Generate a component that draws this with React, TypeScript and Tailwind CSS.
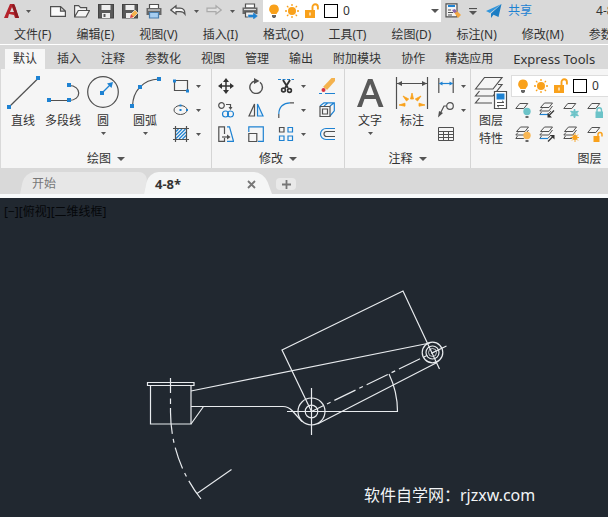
import type { ReactNode } from 'react';

const INK = '#505050';
const BLUE = '#1e82d2';
const AMBER = '#f9a11b';
const TEAL = '#6cc3c8';

function Svg({ w = 16, h = w, children }: { w?: number; h?: number; children: ReactNode }) {
  return (
    <svg width={w} height={h} viewBox={`0 0 ${w} ${h}`} fill="none" stroke={INK} strokeWidth="1.2" className="block shrink-0" aria-hidden="true">
      {children}
    </svg>
  );
}

function Caret({ big = false }: { big?: boolean }) {
  return big ? (
    <Svg w={8} h={4}><path d="M0 0h8L4 4z" fill="#555" stroke="none" /></Svg>
  ) : (
    <Svg w={5} h={3}><path d="M0 0h5L2.5 3z" fill="#555" stroke="none" /></Svg>
  );
}

function Dot({ x, y, s = 4 }: { x: number; y: number; s?: number }) {
  return <rect x={x - s / 2} y={y - s / 2} width={s} height={s} fill={BLUE} stroke="none" />;
}

/* ---------- quick access icons ---------- */

const AppLogo = () => (
  <Svg w={16}>
    <path d="M0 15 6 1h4l1 2 4 12h-4l-1-3-5-1-1 4z" fill="#b5232c" stroke="none" />
    <path d="M6 9 8 4l2 5z" fill="#d9d9d9" stroke="none" />
    <path d="M10 1l1 2 4 12h-3L8 2z" fill="#8c1a22" stroke="none" />
  </Svg>
);
const NewFile = () => <Svg><path d="M.6 3.600h10l4.800 4.500v5.300H.6zM10.500 3.600v4.600h4.900" fill="#fafafa" /></Svg>;
const OpenFile = () => <Svg><path d="M.6 14V2.600h4l2 2h6v3M.6 14l3.700-6.500H15.500L12 14z" fill="#f4f4f4" /></Svg>;
const SaveFile = () => (
  <Svg>
    <path d="M.5 1.500h15v13.500H.5z" fill="#5a5a5a" stroke="#444" />
    <path d="M3.500 2h9v5h-9zM4 10h8v5H4z" fill="#efefef" stroke="none" />
    <path d="M5.500 11h2v3h-2z" fill="#5a5a5a" stroke="none" />
  </Svg>
);
const SaveAs = () => (
  <Svg>
    <path d="M.5 1.500h15v13.500H.5z" fill="#5a5a5a" stroke="#444" />
    <path d="M3.500 2h9v5h-9zM4 10h8v5H4z" fill="#efefef" stroke="none" />
    <path d="m8 15 1-4 4-4 3 3-4.500 4.500z" fill="#f4b24d" stroke="#fff" strokeWidth=".6" />
    <path d="m8 15 1-4 2.500 3z" fill="#d8434e" stroke="none" />
  </Svg>
);
const Printer = () => (
  <Svg>
    <path d="M3.500 1.500h9v4h-9z" fill="#fff" />
    <path d="M.5 5h15v7H.5z" fill="#666" stroke="none" />
    <path d="M2 7h12" stroke="#ddd" />
    <path d="M3.500 9.500h9v5.500h-9z" fill="#a6cdf0" stroke="#4a7fae" />
  </Svg>
);
const PlotPrinter = () => (
  <Svg>
    <path d="M3.500 1h9v4h-9z" fill="#fff" />
    <path d="M.5 4.500h15v6.500H.5z" fill="#666" stroke="none" />
    <path d="M2 6.500h12" stroke="#ddd" />
    <path d="M3.500 9h9v5h-9z" fill="#f0f0f0" />
    <path d="M6 11.500h5V9l5 4-5 4v-2.500H6z" fill="#1e82d2" stroke="#d9d9d9" strokeWidth=".5" />
  </Svg>
);
const Undo = () => <Svg><path d="M.8 7 6 2.800v2.400h4c3.500 0 5 2.500 5 6-1.200-2-2.800-2.600-5-2.600H6V11z" fill="#f4f4f4" /></Svg>;
const Redo = () => <Svg><path d="M15.200 7 10 2.800v2.400H1v3.400h9V11z" fill="#e0e0e0" stroke="#aaa" /></Svg>;
const LayerTool = () => (
  <Svg>
    <path d="M1 .8h11v13H1z" fill="#f3f3f3" />
    <path d="M3 3h7" stroke={BLUE} strokeWidth="2" />
    <path d="M3 7h3M3 9.500h5M3 12h4" />
    <path d="m8 8 3-1 5 5-3 3z" fill="#f4a742" stroke="none" />
    <path d="m7 7 3-1 2 3-3 1z" fill="#8866b0" stroke="none" />
  </Svg>
);
const Send = () => (
  <Svg>
    <path d="M15.500 1 0 8l4 2z" fill="#3296dc" stroke="none" />
    <path d="M15.500 1 5 10.500V15l2.500-3.200L12.500 14z" fill="#1b7dc4" stroke="none" />
  </Svg>
);

/* ---------- layer state icons ---------- */

const Bulb = () => (
  <Svg w={12} h={16}>
    <path d="M6 1.500a4.800 4.800 0 0 1 2.800 8.700V11H3.200v-.8A4.800 4.800 0 0 1 6 1.500z" fill={AMBER} stroke="none" />
    <path d="M4 12h4v1.500L7 15H5l-1-1.500z" fill="#666" stroke="none" />
  </Svg>
);
const Sun = () => (
  <Svg>
    <circle cx="8" cy="8" r="4" fill={AMBER} stroke="none" />
    <path d="M8 1v2M8 13v2M1 8h2M13 8h2M3 3l1.400 1.400M11.600 11.600 13 13M13 3l-1.400 1.400M3 13l1.400-1.400" stroke={AMBER} strokeWidth="1.3" />
  </Svg>
);
const Unlock = () => (
  <Svg>
    <path d="M1 7h10v8H1z" fill={AMBER} stroke="none" />
    <path d="M8.500 7V4a2.700 2.700 0 0 1 5.400 0v2.500" stroke={AMBER} strokeWidth="1.900" />
    <path d="M6 9.500v3" stroke="#fff" />
  </Svg>
);
const Swatch = () => <span className="block size-[14px] shrink-0 border border-black bg-white" />;

/* ---------- large ribbon icons ---------- */

const LineIcon = () => <Svg w={36}><path d="M4.500 32.500 33 4.500" /><Dot x={4} y={33} /><Dot x={33} y={4} /></Svg>;
const PolylineIcon = () => (
  <Svg w={36}><path d="M4 26.500h20c13 0 13-15 0-15" /><Dot x={4} y={26} /><Dot x={24} y={26} /><Dot x={24} y={11} /></Svg>
);
const CircleIcon = () => (
  <Svg w={36}>
    <circle cx="18" cy="18" r="15.300" />
    <Dot x={17} y={19} />
    <path d="m18 18 8-8" stroke={BLUE} />
    <path d="m28 8-1.500 6L22 9.500z" fill={BLUE} stroke="none" />
  </Svg>
);
const ArcIcon = () => (
  <Svg w={36}><path d="M5.500 32C6 18 15 5.500 32 5" /><Dot x={5} y={32} /><Dot x={13} y={13} /><Dot x={32} y={5} /></Svg>
);
const TextIcon = () => (
  <Svg w={36}>
    <path d="M5 33 16 5h4.500l11 28h-4.800l-3-8H12.500l-2.800 8zM14 21h8.200L18.200 10z" fill="#595959" fillRule="evenodd" stroke="none" />
  </Svg>
);
const DimensionIcon = () => (
  <Svg w={36}>
    <path d="M2.500 3v32M33.500 3v32M3 9.500h30" />
    <path d="m3 9.500 5-2.500v5zM33 9.500 28 7v5z" fill={INK} stroke="none" />
    <path d="m18 19-1.500 6h3zM9 22l3.500 5 2.200-2zM27 22l-3.500 5-2.200-2zM5 31l6-1.800v3zM31 31l-6-1.800v3z" fill={AMBER} stroke={AMBER} strokeWidth=".8" />
  </Svg>
);
const LayerPropsIcon = () => (
  <Svg w={36}>
    <path d="m2.500 15 9-11.500H29L20 15z" fill="#f5f5f5" />
    <path d="M6.500 17 2.500 22H20l9-11.500h-4M6.500 24l-4 5H19" />
    <path d="M21.500 17.500h12v17h-12z" fill="#fff" />
    <path d="M23.500 19.500h8v6h-8z" fill={BLUE} stroke="none" />
    <path d="M24 28.500h7l-2-1.700M31 31.500h-7l2 1.700" strokeWidth="1" />
  </Svg>
);

/* ---------- small ribbon icons ---------- */

const RectIcon = () => <Svg><path d="M1.500 2.500h13v10h-13z" /><Dot x={1.500} y={3} s={3} /><Dot x={14.500} y={13} s={3} /></Svg>;
const EllipseIcon = () => <Svg><ellipse cx="7.500" cy="8" rx="6.500" ry="4.500" strokeWidth="1" /><Dot x={7.500} y={8} s={2} /><Dot x={14} y={8} s={2} /><Dot x={7.500} y={3.500} s={2} /></Svg>;
const HatchIcon = () => (
  <Svg>
    <path d="M3 5.500 5.500 3M3 9l6-6M3 12.500 12.500 3M6 13l7-7M9.500 13 13 9.500" stroke={BLUE} />
    <path d="M2.500 0v16M13.500 0v16M0 2.500h16M0 13.500h16" />
  </Svg>
);
const MoveIcon = () => (
  <Svg>
    <path d="M8 2v12M2 8h12" stroke="#333" strokeWidth="1.500" />
    <path d="m8 0 3 4H5zM8 16l3-4H5zM0 8l4-3v6zM16 8l-4-3v6z" fill="#333" stroke="none" />
  </Svg>
);
const RotateIcon = () => <Svg><path d="M12 4.200A6.300 6.300 0 1 1 7 3" strokeWidth="1.400" /><path d="M6 0l5.500 3L6 6z" fill={INK} stroke="none" /></Svg>;
const TrimIcon = () => (
  <Svg>
    <path d="M0 1.500h16" stroke={BLUE} strokeDasharray="3 1.500" />
    <path d="m5 2 5 8M12 2 7 10" stroke="#333" strokeWidth="1.900" />
    <circle cx="5.500" cy="12" r="1.900" stroke="#333" strokeWidth="1.600" /><circle cx="11.500" cy="12.500" r="1.900" stroke="#333" strokeWidth="1.600" />
  </Svg>
);
const EraseIcon = () => (
  <Svg>
    <path d="m4 9 8.500-9H16v3L8 12z" fill="#f4b24d" stroke="none" />
    <path d="m4 9 4 3-2 1.500-3-1z" fill="#eee" stroke="none" />
    <circle cx="4.500" cy="12" r="2" fill="#d8323f" stroke="none" />
    <path d="M0 15.500h3M6 15.500h10" stroke={BLUE} />
  </Svg>
);
const CopyIcon = () => (
  <Svg>
    <circle cx="3.500" cy="3.500" r="2.800" /><path d="M8 2.500h4.500V6" /><path d="M10.500 5h4l-2 3z" fill={INK} stroke="none" />
    <circle cx="7.500" cy="12" r="3" stroke={BLUE} /><circle cx="12.500" cy="12" r="3" stroke={BLUE} />
  </Svg>
);
const MirrorIcon = () => <Svg><path d="M6.500 2v12H1z" /><path d="M9.500 2v12H15z" fill="#d9ecfb" stroke={BLUE} /></Svg>;
const FilletIcon = () => <Svg><path d="M.8 16v-4M12 .8h4" /><path d="M.8 12C.8 5 5.500 .8 12 .8" stroke={BLUE} /></Svg>;
const BoxIcon = () => (
  <Svg><path d="M5 4 9 .8h6.300v8L11 14M1 4l4-3.200h4M11 4l4.300-3.200" stroke={BLUE} /><path d="M1 4.500h10v10H1zM3.500 7h5v5h-5z" /></Svg>
);
const StretchIcon = () => (
  <Svg><path d="M6.500 8V.8H.8v14.500h5.700V12" /><path d="M9 .8h2.500l4 14.500H9" stroke={BLUE} /><path d="M4 11h6" /><path d="m9 8.500 3.500 2.500L9 13.500z" fill={INK} stroke="none" /></Svg>
);
const ScaleIcon = () => <Svg><path d="M.8 6V.8h14.500v14.500H10" stroke={BLUE} /><path d="M.8 7.500h8v8h-8z" /></Svg>;
const ArrayIcon = () => (
  <Svg><path d="M1.500 1.500h4.500v4.500H1.500z" /><path d="M10 1.500h4.500v4.500H10zM1.500 10h4.500v4.500H1.500zM10 10h4.500v4.500H10z" stroke={BLUE} /></Svg>
);
const OffsetIcon = () => <Svg><path d="M16 2.500H7a5.500 5.500 0 0 0 0 11h9" stroke={BLUE} /><path d="M16 5.500H7.500a2.500 2.500 0 0 0 0 5H16" /></Svg>;
const LinearIcon = () => (
  <Svg><path d="M.8 0v15M15.200 0v15" /><path d="M1.500 5.500h13" stroke={BLUE} /><path d="m1 5.500 3.500-2v4zM15 5.500l-3.500-2v4z" fill={BLUE} stroke="none" /></Svg>
);
const LeaderIcon = () => <Svg><circle cx="12" cy="4" r="3.300" /><path d="M8.500 4H6L2 12" /><path d="M0 15.500 1 9l4 2z" fill={INK} stroke="none" /></Svg>;
const TableIcon = () => <Svg><path d="M.5 1.500h15v13H.5zM.5 5.500h15M.5 8.500h15M.5 11.500h15M5.500 5.500v9M10.500 5.500v9" strokeWidth="1" /></Svg>;

const Sheet = ({ stack = false }: { stack?: boolean }) =>
  stack ? (
    <>
      <path d="m1.500 5.500 4-4.500h8L10 5.500zM3 6.500.8 9h9L13.500 4" strokeWidth="1" />
      <path d="M2.500 10 .8 12.500h8L12 9" strokeWidth="1" />
    </>
  ) : (
    <path d="m.8 6.500 4-5h8l-4 5z" strokeWidth="1" />
  );
const LayerOff = () => <Svg><Sheet /><circle cx="12" cy="9.500" r="3.700" fill={TEAL} stroke="none" /><path d="M10.500 14h3v2h-3z" fill="#666" stroke="none" /></Svg>;
const LayerIsolate = () => <Svg><Sheet stack /><path d="M1 12.500h8" stroke={BLUE} /><path d="m15 8.500-5 5" stroke="#333" /><path d="M8.500 15.500V11l4.500 4.500z" fill="#333" stroke="none" /></Svg>;
const LayerFreeze = () => (
  <Svg><Sheet /><circle cx="11.500" cy="11.500" r="2.500" stroke={TEAL} /><path d="M11.500 7v9M7.500 9.200l8 4.600M15.500 9.200l-8 4.600" stroke={TEAL} strokeWidth="1.500" /></Svg>
);
const LayerLock = () => <Svg><Sheet /><path d="M8.500 9.500h7.500V16H8.500z" fill={TEAL} stroke="none" /><path d="M10 10V8a2.200 2.200 0 0 1 4.500 0v2" stroke={TEAL} strokeWidth="1.400" /></Svg>;
const LayerOn = () => <Svg><Sheet stack /><circle cx="12" cy="9.500" r="3.700" fill="#f8b653" stroke="none" /><path d="M10.500 14h3v2h-3z" fill="#666" stroke="none" /></Svg>;
const LayerUnisolate = () => <Svg><Sheet stack /><path d="M1 12.500h8" stroke={BLUE} /><path d="m9 15.500 5-5" stroke="#333" /><path d="M15.500 9v4.500L11 9z" fill="#333" stroke="none" /></Svg>;
const LayerThaw = () => (
  <Svg>
    <Sheet stack /><circle cx="12" cy="11.500" r="2.500" fill={AMBER} stroke="none" />
    <path d="M12 7v9M7.500 11.500H16M9 8.500l6 6M15 8.500l-6 6" stroke={AMBER} strokeWidth=".9" />
  </Svg>
);
const LayerUnlock = () => <Svg><Sheet /><path d="M6.500 10h6v6h-6z" fill={AMBER} stroke="none" /><path d="M11 10V8.500a2 2 0 0 1 4 0v2" stroke={AMBER} strokeWidth="1.500" /></Svg>;

/* ---------- building blocks ---------- */

function QuickButton({ label, children }: { label: string; children: ReactNode }) {
  return <button type="button" aria-label={label} className="flex w-6 shrink-0 justify-center">{children}</button>;
}

function MiniCaret({ label }: { label: string }) {
  return <button type="button" aria-label={label} className="flex w-3 shrink-0 justify-center"><Caret /></button>;
}

function LargeTool({ icon, label, menu = false, wide = false }: { icon: ReactNode; label: ReactNode; menu?: boolean; wide?: boolean }) {
  return (
    <button type="button" className={`flex shrink-0 flex-col items-center gap-[2px] whitespace-nowrap ${wide ? 'w-10' : 'w-9'}`}>
      {icon}
      <span className="leading-[18px]">{label}</span>
      {menu && <Caret />}
    </button>
  );
}

function SmallTool({ icon, label, menu = false }: { icon: ReactNode; label: string; menu?: boolean }) {
  return (
    <button type="button" aria-label={label} className="flex h-6 shrink-0 items-center">
      <span className="flex w-6 justify-center">{icon}</span>
      {menu && <span className="flex w-[11px] justify-center"><Caret /></span>}
    </button>
  );
}

function Panel({ title, className, children }: { title: string; className: string; children: ReactNode }) {
  return (
    <section className={`flex shrink-0 flex-col border-r border-[#d5d5d5] pt-[5px] ${className}`}>
      <div className="flex h-[72px]">{children}</div>
      <button type="button" className="flex h-[22px] items-center justify-center gap-[6px] pt-[3px]">
        {title}<Caret big />
      </button>
    </section>
  );
}

function LayerSelect({ label, className }: { label: string; className: string }) {
  return (
    <div className={`flex shrink-0 items-center bg-white pl-[5px] ${className}`}>
      <Bulb />
      <span className="pl-1"><Sun /></span>
      <span className="pl-1"><Unlock /></span>
      <span className="pl-1"><Swatch /></span>
      <select aria-label={label} className="min-w-0 flex-1 appearance-none bg-transparent pl-[5px] outline-none">
        <option>0</option>
      </select>
      <span className="pr-[2px]"><Caret big /></span>
    </div>
  );
}

const menus = ['文件(F)', '编辑(E)', '视图(V)', '插入(I)', '格式(O)', '工具(T)', '绘图(D)', '标注(N)', '修改(M)', '参数(P)'];
const ribbonTabs = ['默认', '插入', '注释', '参数化', '视图', '管理', '输出', '附加模块', '协作', '精选应用', 'Express Tools'];

function Drawing() {
  return (
    <svg width="608" height="290" viewBox="0 227 608 290" fill="none" stroke="#e8ebee" strokeWidth="1.200" className="block" role="img" aria-label="4-8">
      <path d="M147.500 382.500h46.500v3h-46.500zM150.500 385.500v38.500h40.500v-38.500" />
      <path d="M170.500 378v15M170.500 398.500v5.500M170.500 408v4" />
      <path d="M170.500 412A141 141 0 0 0 201 499" strokeDasharray="22 5 4 5" />
      <path d="m197 493.500 34.500-24" />
      <path d="M191 391 430 343M191 406.500h92q5 0 9 4l10 11M191 424l12.500-17.500" />
      <circle cx="311.500" cy="411.500" r="13.500" />
      <circle cx="311.500" cy="411.500" r="6.300" />
      <path d="M311.500 388v47M287 411.500h111M317.500 424 437 362.500" />
      <path d="M311.500 411.500 282 350l121-59 36.500 78" />
      <path d="m311.500 411.500 135-65.500" strokeDasharray="23.500 4.200 4 4.200" strokeDashoffset="10.500" />
      <path d="M389 374a86.500 86.500 0 0 1 8.500 37.500" />
      <circle cx="432.500" cy="352.500" r="10.300" />
      <circle cx="432.500" cy="352.500" r="6.500" />
      <circle cx="432.500" cy="352.500" r="4" strokeWidth=".8" />
    </svg>
  );
}

export default function App() {
  return (
    <div className="flex min-h-screen w-full flex-col overflow-hidden bg-[#d9d9d9] font-['Noto_Sans','Noto_Sans_CJK_SC',sans-serif] text-[12px] leading-4 whitespace-nowrap text-[#333]">
      <header>
        <div className="flex h-[22px] items-center overflow-hidden">
          <button type="button" aria-label="应用程序菜单" className="flex w-[46px] shrink-0 items-center gap-[6px] pl-1"><AppLogo /><Caret /></button>
          <QuickButton label="新建"><NewFile /></QuickButton>
          <QuickButton label="打开"><OpenFile /></QuickButton>
          <QuickButton label="保存"><SaveFile /></QuickButton>
          <QuickButton label="另存为"><SaveAs /></QuickButton>
          <QuickButton label="打印"><Printer /></QuickButton>
          <QuickButton label="放弃"><Undo /></QuickButton>
          <MiniCaret label="放弃列表" />
          <QuickButton label="重做"><Redo /></QuickButton>
          <MiniCaret label="重做列表" />
          <QuickButton label="批处理打印"><PlotPrinter /></QuickButton>
          <LayerSelect label="当前图层" className="ml-[1px] h-[22px] w-[178px]" />
          <QuickButton label="图层工具"><LayerTool /></QuickButton>
          <button type="button" aria-label="自定义" className="flex w-4 shrink-0 justify-center">
            <Svg w={8} h={7}><path d="M0 .5h8" /><path d="M0 3h8L4 7z" fill="#555" stroke="none" /></Svg>
          </button>
          <button type="button" className="ml-[5px] flex shrink-0 items-center gap-[6px] text-[#1e82d2]"><Send />共享</button>
          <h1 className="ml-16 shrink-0">4-8.dwg</h1>
        </div>
        <nav className="flex h-[22px] items-center gap-[25px] overflow-hidden pt-1 pl-[14px]">
          {menus.map((m) => <button key={m} type="button" className="shrink-0">{m}</button>)}
        </nav>
        <div className="flex items-end gap-1 overflow-hidden border-t border-white pt-1 pl-[5px]">
          {ribbonTabs.map((t, i) => (
            <button key={t} type="button" className={`h-5 shrink-0 px-2 ${i === 0 ? 'bg-[#f7f7f7]' : ''} ${t === 'Express Tools' ? 'text-[13px]' : ''}`}>{t}</button>
          ))}
        </div>
      </header>

      <main className="flex flex-1 flex-col">
        <div className="ml-[1px] flex overflow-hidden bg-[#f5f5f5]">
          <Panel title="绘图" className="w-[211px]">
            <div className="flex gap-1 pl-1">
              <LargeTool icon={<LineIcon />} label="直线" />
              <LargeTool icon={<PolylineIcon />} label="多段线" />
              <LargeTool icon={<CircleIcon />} label="圆" menu />
              <LargeTool icon={<ArcIcon />} label="圆弧" menu wide />
              <div className="flex flex-col">
                <SmallTool icon={<RectIcon />} label="矩形" menu />
                <SmallTool icon={<EllipseIcon />} label="椭圆" menu />
                <SmallTool icon={<HatchIcon />} label="图案填充" menu />
              </div>
            </div>
          </Panel>
          <Panel title="修改" className="w-[133px]">
            <div className="grid grid-cols-[24px_24px_35px_24px] content-start gap-x-[6px] pl-[2px]">
              <SmallTool icon={<MoveIcon />} label="移动" />
              <SmallTool icon={<RotateIcon />} label="旋转" />
              <SmallTool icon={<TrimIcon />} label="修剪" menu />
              <SmallTool icon={<EraseIcon />} label="删除" />
              <SmallTool icon={<CopyIcon />} label="复制" />
              <SmallTool icon={<MirrorIcon />} label="镜像" />
              <SmallTool icon={<FilletIcon />} label="圆角" menu />
              <SmallTool icon={<BoxIcon />} label="分解" />
              <SmallTool icon={<StretchIcon />} label="拉伸" />
              <SmallTool icon={<ScaleIcon />} label="缩放" />
              <SmallTool icon={<ArrayIcon />} label="阵列" menu />
              <SmallTool icon={<OffsetIcon />} label="偏移" />
            </div>
          </Panel>
          <Panel title="注释" className="w-[126px]">
            <div className="flex gap-[2px] pl-[5px]">
              <LargeTool icon={<TextIcon />} label="文字" menu wide />
              <LargeTool icon={<DimensionIcon />} label="标注" wide />
              <div className="flex flex-col">
                <SmallTool icon={<LinearIcon />} label="线性" menu />
                <SmallTool icon={<LeaderIcon />} label="引线" menu />
                <SmallTool icon={<TableIcon />} label="表格" />
              </div>
            </div>
          </Panel>
          <Panel title="图层" className="w-[252px]">
            <div className="flex flex-1">
              <LargeTool icon={<LayerPropsIcon />} label={<>图层<br />特性</>} wide />
              <div className="flex flex-1 flex-col">
                <LayerSelect label="图层" className="mt-[1px] mb-[1px] h-[22px] border border-[#ddd]" />
                <div className="flex">
                  <SmallTool icon={<LayerOff />} label="关" />
                  <SmallTool icon={<LayerIsolate />} label="隔离" />
                  <SmallTool icon={<LayerFreeze />} label="冻结" />
                  <SmallTool icon={<LayerLock />} label="锁定" />
                </div>
                <div className="flex">
                  <SmallTool icon={<LayerOn />} label="打开所有图层" />
                  <SmallTool icon={<LayerUnisolate />} label="取消隔离" />
                  <SmallTool icon={<LayerThaw />} label="解冻" />
                  <SmallTool icon={<LayerUnlock />} label="解锁" />
                </div>
              </div>
            </div>
          </Panel>
        </div>

        <div className="flex h-[30px] items-end overflow-hidden border-b-4 border-[#f8fafb] pl-5">
          <button type="button" className="relative isolate flex h-[22px] w-[124px] items-center pt-[2px] pl-3 text-[#777] before:absolute before:inset-0 before:-z-10 before:origin-bottom before:-skew-x-12 before:rounded-t-[10px] before:bg-[#e7e7e7]">
            开始
          </button>
          <div className="relative isolate flex h-[22px] w-[128px] items-center justify-between pt-[2px] pr-4 pl-[11px] before:absolute before:inset-y-0 before:left-0 before:-z-10 before:w-16 before:origin-bottom before:-skew-x-12 before:rounded-tl-[10px] before:bg-[#f5f6f6] after:absolute after:inset-y-0 after:right-0 after:-z-10 after:w-24 after:origin-bottom after:skew-x-[20deg] after:rounded-tr-[10px] after:bg-[#f5f6f6]">
            <button type="button" className="text-[13px] font-bold">4-8*</button>
            <button type="button" aria-label="关闭">
              <Svg w={9}><path d="m1 1 7 7M8 1 1 8" stroke="#777" strokeWidth="1.800" /></Svg>
            </button>
          </div>
          <button type="button" aria-label="新图形" className="mb-1 ml-1 flex h-3 w-5 items-center justify-center rounded-[4px] bg-[#e9e9e9]">
            <Svg w={9}><path d="M4.500 0v9M0 4.500h9" stroke="#777" strokeWidth="1.800" /></Svg>
          </button>
        </div>

        <div className="relative flex-1 overflow-hidden bg-[#212830]">
          <p className="h-[29px] pt-[6px] pl-1 text-[#05070a]">[−][俯视][二维线框]</p>
          <Drawing />
          <p className="absolute bottom-3 left-[364px] text-[16px] leading-5 text-[#f2f4f6]">软件自学网：rjzxw.com</p>
        </div>
      </main>
    </div>
  );
}
